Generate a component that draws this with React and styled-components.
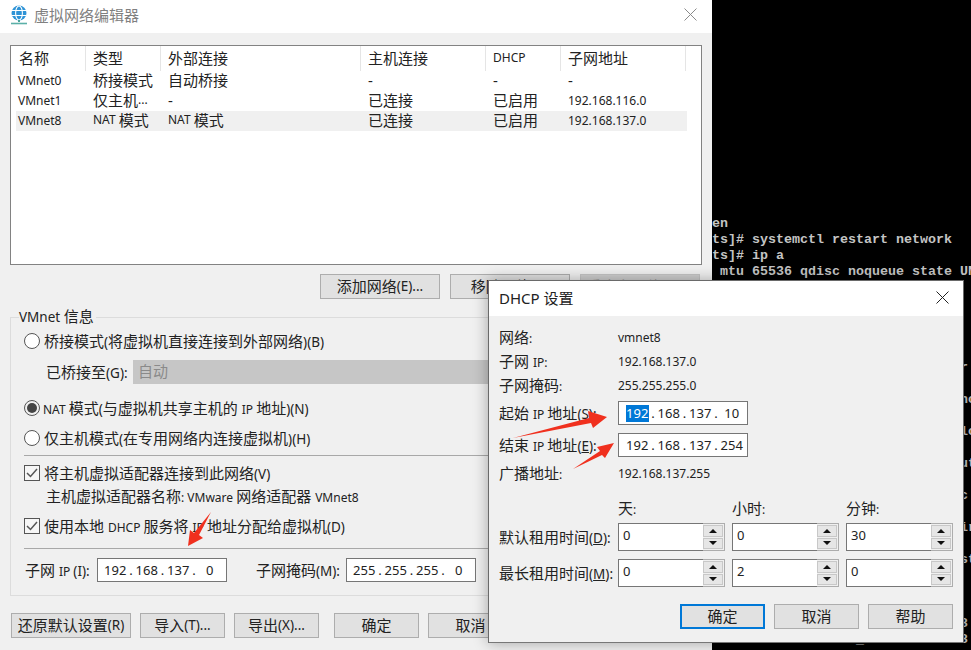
import React from 'react';
import styled, { createGlobalStyle } from 'styled-components';

const Global = createGlobalStyle`
  html, body { margin: 0; padding: 0; background: #000; }
  * { box-sizing: border-box; }
`;
const Desktop = styled.div`
  position: relative; width: 971px; height: 650px; overflow: hidden; background: #000;
  font-family: "Noto Sans", "Noto Sans CJK SC", sans-serif; font-size: 15px; font-weight: 400; color: #222;
`;
const Terminal = styled.pre`
  position: absolute; left: 712px; top: 0; width: 259px; height: 650px; margin: 0; padding-top: 216px; overflow: hidden;
  font-family: "Liberation Mono", monospace; font-size: 13.33px; line-height: 16px; font-weight: 700; color: #c4c4c4;
`;
const MainWindow = styled.div`
  position: absolute; left: 0; top: 0; width: 712px; height: 650px; background: #f0f0f0; display: flex; flex-direction: column;
`;
const TitleBar = styled.div`
  height: ${p => p.$h}px; flex: none; background: #fff; display: flex; align-items: center; padding: 0 ${p => p.$pr}px ${p => p.$pb}px ${p => p.$pl}px;
  color: ${p => p.$c};
`;
const TitleText = styled.span`margin-left: ${p => p.$ml || 0}px; flex: 1; white-space: nowrap;`;
const Body = styled.div`flex: 1; padding: 12px 10px 0; display: flex; flex-direction: column;`;
const ListBox = styled.div`height: 220px; flex: none; background: #fff; border: 1px solid #828282; padding-left: 5px;`;
const HeadRow = styled.div`display: grid; grid-template-columns: 70px 75px 200px 125px 75px 125px; height: 25px; width: 671px;`;
const HeadCell = styled.div`
  display: flex; align-items: center; padding-left: ${p => p.$first ? 3 : 7}px; border-right: 1px solid #e5e5e5; white-space: nowrap; padding-bottom: 3px;
`;
const DataRow = styled.div`
  display: grid; grid-template-columns: 70px 75px 200px 125px 75px 125px; height: 20px; width: 671px; background: ${p => p.$sel ? '#f0f0f0' : 'transparent'};
`;
const Cell = styled.div`display: flex; align-items: center; padding-left: ${p => p.$first ? 2 : 7}px; padding-bottom: ${p => p.$up ? 2 : 0}px; white-space: nowrap; line-height: 18px;`;
const Lat = styled.span`font-size: 12px; white-space: pre; u { text-underline-offset: 1px; }`;
const Par = styled.span`font-size: 13.5px; white-space: pre; u { text-underline-offset: 1px; }`;
const Big = styled.span`font-size: 15px; white-space: pre;`;
const BtnRow = styled.div`
  display: flex; gap: ${p => p.$gap ?? 10}px; justify-content: ${p => p.$j || 'flex-end'}; margin-top: ${p => p.$mt}px; padding-right: ${p => p.$pr || 0}px; padding-left: ${p => p.$pl || 0}px; flex: none;
`;
const Btn = styled.div`
  width: ${p => p.$w}px; height: 25px; flex: none; background: ${p => p.$dis ? '#cfcfcf' : '#e1e1e1'}; color: ${p => p.$dis ? '#9a9a9a' : 'inherit'};
  display: flex; align-items: center; justify-content: center; white-space: nowrap; padding-bottom: 2px;
  border: ${p => p.$def ? '2px solid #0078d7' : p.$dis ? '1px solid #c4c4c4' : '1px solid #adadad'}; margin-left: ${p => p.$ml || 0}px;
`;
const Group = styled.div`
  position: relative; height: 279px; margin-top: 18px; flex: none; border: 1px solid #dcdcdc; padding: 11px 9px 0 13px; display: flex; flex-direction: column;
`;
const Legend = styled.div`position: absolute; left: 8px; top: -12px; background: #f0f0f0; padding: 0 2px 0 0; line-height: 20px;`;
const OptRow = styled.div`height: ${p => p.$h || 24}px; margin-top: ${p => p.$mt || 0}px; flex: none; display: flex; align-items: center; white-space: nowrap; padding-left: ${p => p.$pl || 0}px;`;
const OptText = styled.span`padding-bottom: 2px; white-space: pre;`;
const Radio = styled.span`
  width: 16px; height: 16px; border-radius: 50%; border: 1px solid #555; background: ${p => p.$on ? '#f0f0f0' : '#fff'}; margin-right: ${p => p.$on ? 3 : 4}px; flex: none; display: flex; align-items: center; justify-content: center;
  &::after { content: ""; display: ${p => p.$on ? 'block' : 'none'}; width: 10px; height: 10px; border-radius: 50%; background: #444; }
`;
const Check = styled.span`
  width: 16px; height: 16px; border: 1px solid #555; background: #f6f6f6; margin-right: 4px; flex: none; display: flex; align-items: center; justify-content: center;
`;
const BridgeLabel = styled.span`width: 87px; flex: none; padding-bottom: 2px;`;
const Select = styled.div`width: 559px; height: 24px; background: #c6c6c6; color: #8a8a8a; padding: 0 0 3px 5px; display: flex; align-items: center;`;
const Sep = styled.div`height: 1px; flex: none; background: #a8a8a8; margin-top: ${p => p.$mt}px;`;
const SubnetRow = styled.div`display: flex; align-items: center; margin-top: ${p => p.$mt}px; height: 24px; flex: none; white-space: nowrap;`;
const SubnetLabel = styled.span`width: ${p => p.$w}px; flex: none; padding: 0 0 2px ${p => p.$pl || 0}px; margin-left: ${p => p.$ml || 0}px;`;
const IpField = styled.div`
  width: 130px; height: 24px; flex: none; background: #fff; border: 1px solid #767676; display: flex; align-items: center; padding-left: ${p => p.$pl}px;
  font-size: 13px; color: #222;
`;
const Octet = styled.span`width: 22.5px; flex: none; text-align: center; line-height: 17px; background: ${p => p.$sel ? '#0078d7' : 'transparent'}; color: ${p => p.$sel ? '#fff' : 'inherit'};`;
const Dot = styled.span`width: 9px; flex: none; text-align: center;`;

const Dialog = styled.div`
  position: absolute; left: 488px; top: 280px; width: 476px; height: 363px; background: #f0f0f0; border: 1px solid #6a6a6a; border-bottom-color: #777;
  box-shadow: 0 0 14px rgba(0,0,0,.32); display: flex; flex-direction: column;
`;
const DBody = styled.div`flex: 1; padding: 9px 10px 0; display: flex; flex-direction: column;`;
const DRow = styled.div`display: flex; align-items: center; height: ${p => p.$h || 24}px; margin-top: ${p => p.$mt || 0}px; flex: none; white-space: nowrap;`;
const DLabel = styled.span`width: 119px; flex: none; padding-bottom: 2px;`;
const SpinCols = styled.div`display: flex; gap: 7px;`;
const ColLabel = styled.span`width: 107px; flex: none; padding-bottom: 3px;`;
const Spin = styled.div`width: 107px; height: 28px; flex: none; display: flex;`;
const SpinInput = styled.div`
  width: 85px; height: 28px; flex: none; background: #fff; border: 1px solid #767676; border-right: none; font-size: 13px; padding: 1px 0 0 4px; line-height: 20px;
`;
const SpinBox = styled.div`width: 22px; height: 28px; flex: none; border: 1px solid #adadad; border-left: none; padding: 1px 1px 1px 0; display: flex; flex-direction: column; gap: 1px; background: #f0f0f0;`;
const SpinBtn = styled.div`
  flex: 1; background: #e6e6e6; border: 1px solid #c8c8c8; display: flex; align-items: center; justify-content: center;
  &::after { content: ""; border-left: 4px solid transparent; border-right: 4px solid transparent;
    ${p => p.$up ? 'border-bottom: 4px solid #111;' : 'border-top: 4px solid #111;'} }
`;
const Annotation = styled.svg`position: absolute; left: 0; top: 0; width: 971px; height: 650px; pointer-events: none;`;

const pad = ' '.repeat(31);
const termLines = [
  'en',
  'ts]# systemctl restart network',
  'ts]# ip a',
  ' mtu 65536 qdisc noqueue state UNKNOWN',
  '', '', '', '', '',
  pad + 'r :',
  '',
  pad + 'no',
  '',
  pad + 'lo',
  '',
  pad + 'ut',
  '',
  pad + 'c',
  '',
  pad + 'ir',
  '',
  pad + 'st',
  '', '', '',
  pad + '8',
  '                 1_  1         8',
];

const Globe = () => (
  <svg width="18" height="20" viewBox="0 0 18 20">
    <circle cx="9" cy="8" r="7.5" fill="#2e93d6" />
    <ellipse cx="9" cy="8" rx="3.4" ry="7" fill="none" stroke="#fff" strokeWidth="1.1" />
    <path d="M2 5.5h14M2 10.5h14" stroke="#fff" strokeWidth="1.1" />
    <path d="M9 15v2" stroke="#4aa39a" strokeWidth="2" />
    <path d="M1 18.5h16" stroke="#5bb0a8" strokeWidth="1.6" />
  </svg>
);
const CloseX = ({ color }) => (
  <svg width="13" height="13" viewBox="0 0 13 13">
    <path d="M.5.5l12 12M12.5.5l-12 12" stroke={color} strokeWidth="1" fill="none" />
  </svg>
);
const Tick = () => (
  <svg width="12" height="10" viewBox="0 0 12 10"><path d="M1 5l3.5 3.5L11 1" stroke="#555" strokeWidth="1.5" fill="none" /></svg>
);
const Ip = ({ parts, pl, selFirst }) => (
  <IpField $pl={pl}>
    {parts.map((o, i) => (
      <React.Fragment key={i}>
        <Octet $sel={selFirst && i === 0}>{o}</Octet>
        {i < 3 && <Dot>.</Dot>}
      </React.Fragment>
    ))}
  </IpField>
);
const SpinField = ({ v }) => (
  <Spin>
    <SpinInput>{v}</SpinInput>
    <SpinBox><SpinBtn $up /><SpinBtn /></SpinBox>
  </Spin>
);

const rows = [
  [<Lat>VMnet0</Lat>, '桥接模式', '自动桥接', '-', '-', '-'],
  [<Lat>VMnet1</Lat>, <>仅主机<Lat>...</Lat></>, '-', '已连接', '已启用', <Lat>192.168.116.0</Lat>],
  [<Lat>VMnet8</Lat>, <><Lat>NAT </Lat>模式</>, <><Lat>NAT </Lat>模式</>, '已连接', '已启用', <Lat>192.168.137.0</Lat>],
];

export default function App() {
  return (
    <Desktop>
      <Global />
      <Terminal>{termLines.join('\n')}</Terminal>
      <MainWindow>
        <TitleBar $h={33} $pl={10} $pr={15} $pb={4} $c="#808080">
          <Globe />
          <TitleText $ml={6}>虚拟网络编辑器</TitleText>
          <CloseX color="#8a8a8a" />
        </TitleBar>
        <Body>
          <ListBox>
            <HeadRow>
              {['名称', '类型', '外部连接', '主机连接', <Lat>DHCP</Lat>, '子网地址'].map((h, i) => (
                <HeadCell key={i} $first={i === 0}>{h}</HeadCell>
              ))}
            </HeadRow>
            {rows.map((r, i) => (
              <DataRow key={i} $sel={i === 2}>
                {r.map((c, j) => <Cell key={j} $first={j === 0} $up={c.type !== Lat}>{c}</Cell>)}
              </DataRow>
            ))}
          </ListBox>
          <BtnRow $mt={9} $pr={2}>
            <Btn $w={120}>添加网络<Par>(E)...</Par></Btn>
            <Btn $w={120}>移除网络<Par>(O)</Par></Btn>
            <Btn $w={120} $dis>重命名网络<Par>(W)...</Par></Btn>
          </BtnRow>
          <Group>
            <Legend><Par>VMnet </Par>信息</Legend>
            <OptRow><Radio /><OptText>桥接模式<Par>(</Par>将虚拟机直接连接到外部网络<Par>)(B)</Par></OptText></OptRow>
            <OptRow $mt={7} $pl={22}><BridgeLabel>已桥接至<Par>(G):</Par></BridgeLabel><Select>自动</Select></OptRow>
            <OptRow $mt={12}><Radio $on /><OptText><Lat>NAT </Lat>模式<Par>(</Par>与虚拟机共享主机的 <Lat>IP </Lat>地址<Par>)(N)</Par></OptText></OptRow>
            <OptRow $mt={6}><Radio /><OptText>仅主机模式<Par>(</Par>在专用网络内连接虚拟机<Par>)(H)</Par></OptText></OptRow>
            <Sep $mt={5} />
            <OptRow $mt={5}><Check><Tick /></Check><OptText>将主机虚拟适配器连接到此网络<Par>(V)</Par></OptText></OptRow>
            <OptRow $h={22} $pl={22}><OptText>主机虚拟适配器名称<Lat>: VMware </Lat>网络适配器 <Lat>VMnet8</Lat></OptText></OptRow>
            <OptRow $mt={7}><Check><Tick /></Check><OptText>使用本地 <Lat>DHCP </Lat>服务将 <Lat>IP </Lat>地址分配给虚拟机<Par>(D)</Par></OptText></OptRow>
            <Sep $mt={10} />
            <SubnetRow $mt={9}>
              <SubnetLabel $w={73} $pl={1}>子网 <Lat>IP </Lat><Par>(I):</Par></SubnetLabel>
              <Ip parts={['192', '168', '137', '0']} pl={6} />
              <SubnetLabel $w={90} $ml={29}>子网掩码<Par>(M):</Par></SubnetLabel>
              <Ip parts={['255', '255', '255', '0']} pl={6} />
            </SubnetRow>
          </Group>
          <BtnRow $mt={17} $j="flex-start" $gap={9} $pl={1}>
            <Btn $w={120}>还原默认设置<Par>(R)</Par></Btn>
            <Btn $w={85}>导入<Par>(T)...</Par></Btn>
            <Btn $w={85}>导出<Par>(X)...</Par></Btn>
            <Btn $w={85} $ml={6}>确定</Btn>
            <Btn $w={85}>取消</Btn>
            <Btn $w={85}>帮助</Btn>
          </BtnRow>
        </Body>
      </MainWindow>
      <Dialog>
        <TitleBar $h={35} $pl={10} $pr={14} $pb={2} $c="#222">
          <TitleText><Big>DHCP </Big>设置</TitleText>
          <CloseX color="#222" />
        </TitleBar>
        <DBody>
          <DRow><DLabel>网络<Lat>:</Lat></DLabel><Lat>vmnet8</Lat></DRow>
          <DRow><DLabel>子网 <Lat>IP:</Lat></DLabel><Lat>192.168.137.0</Lat></DRow>
          <DRow><DLabel>子网掩码<Lat>:</Lat></DLabel><Lat>255.255.255.0</Lat></DRow>
          <DRow $mt={4}><DLabel>起始 <Lat>IP </Lat>地址<Par>(<u>S</u>):</Par></DLabel><Ip parts={['192', '168', '137', '10']} pl={7} selFirst /></DRow>
          <DRow $mt={8}><DLabel>结束 <Lat>IP </Lat>地址<Par>(<u>E</u>):</Par></DLabel><Ip parts={['192', '168', '137', '254']} pl={7} /></DRow>
          <DRow $mt={4}><DLabel>广播地址<Lat>:</Lat></DLabel><Lat>192.168.137.255</Lat></DRow>
          <DRow $mt={12}>
            <DLabel />
            <SpinCols><ColLabel>天<Lat>:</Lat></ColLabel><ColLabel>小时<Lat>:</Lat></ColLabel><ColLabel>分钟<Lat>:</Lat></ColLabel></SpinCols>
          </DRow>
          <DRow $mt={2} $h={28}>
            <DLabel>默认租用时间<Par>(<u>D</u>):</Par></DLabel>
            <SpinCols><SpinField v="0" /><SpinField v="0" /><SpinField v="30" /></SpinCols>
          </DRow>
          <DRow $mt={8} $h={28}>
            <DLabel>最长租用时间<Par>(<u>M</u>):</Par></DLabel>
            <SpinCols><SpinField v="0" /><SpinField v="2" /><SpinField v="0" /></SpinCols>
          </DRow>
          <BtnRow $mt={17} $gap={9}>
            <Btn $w={85} $def>确定</Btn>
            <Btn $w={85}>取消</Btn>
            <Btn $w={85}>帮助</Btn>
          </BtnRow>
        </DBody>
      </Dialog>
      <Annotation viewBox="0 0 971 650">
        <polygon fill="#f0301e" points="513,438 589,418 588,411 607,417 593,428 591,423" />
        <polygon fill="#f0301e" points="573,469 600,451 597,447 614,443 605,458 602,455" />
        <polygon fill="#f0301e" points="211,512 194,533 190,530 188,546 203,538 199,535" />
      </Annotation>
    </Desktop>
  );
}
